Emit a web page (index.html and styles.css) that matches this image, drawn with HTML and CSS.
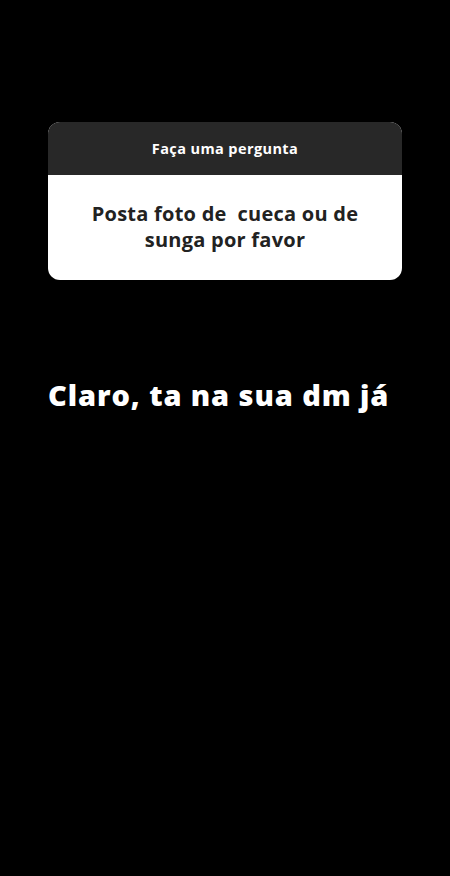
FILE: index.html
```html
<!DOCTYPE html>
<html lang="pt">
<head>
<meta charset="utf-8">
<link rel="stylesheet" href="styles.css">
</head>
<body>
<main class="story">
  <section class="question-card">
    <div class="question-head">Faça uma pergunta</div>
    <div class="question-body">Posta foto de &nbsp;cueca ou de<br>sunga por favor</div>
  </section>
  <p class="answer">Claro, ta na sua dm já</p>
</main>
</body>
</html>
```
FILE: styles.css
```css
html, body {
  margin: 0;
  padding: 0;
  background: #000;
}
.story {
  width: 450px;
  height: 876px;
  background: #000;
  padding: 122px 48px 0 48px;
  box-sizing: border-box;
  font-family: "Open Sans", Inter, sans-serif;
}
.question-card {
  border-radius: 12px;
  overflow: hidden;
  background: #fff;
}
.question-head {
  background: #282828;
  color: #fff;
  height: 53px;
  display: flex;
  align-items: center;
  justify-content: center;
  font-size: 14.5px;
  font-weight: 700;
  letter-spacing: 0.4px;
  padding-bottom: 1px;
  box-sizing: border-box;
}
.question-body {
  height: 105px;
  display: flex;
  align-items: center;
  justify-content: center;
  text-align: center;
  color: #222;
  font-size: 20px;
  font-weight: 700;
  letter-spacing: 0.25px;
  line-height: 26.5px;
  padding-bottom: 1px;
  box-sizing: border-box;
}
.answer {
  margin: 98px 0 0 0;
  color: #fff;
  font-size: 29px;
  font-weight: 800;
  line-height: 34px;
  letter-spacing: 0.9px;
  white-space: nowrap;
}
```
